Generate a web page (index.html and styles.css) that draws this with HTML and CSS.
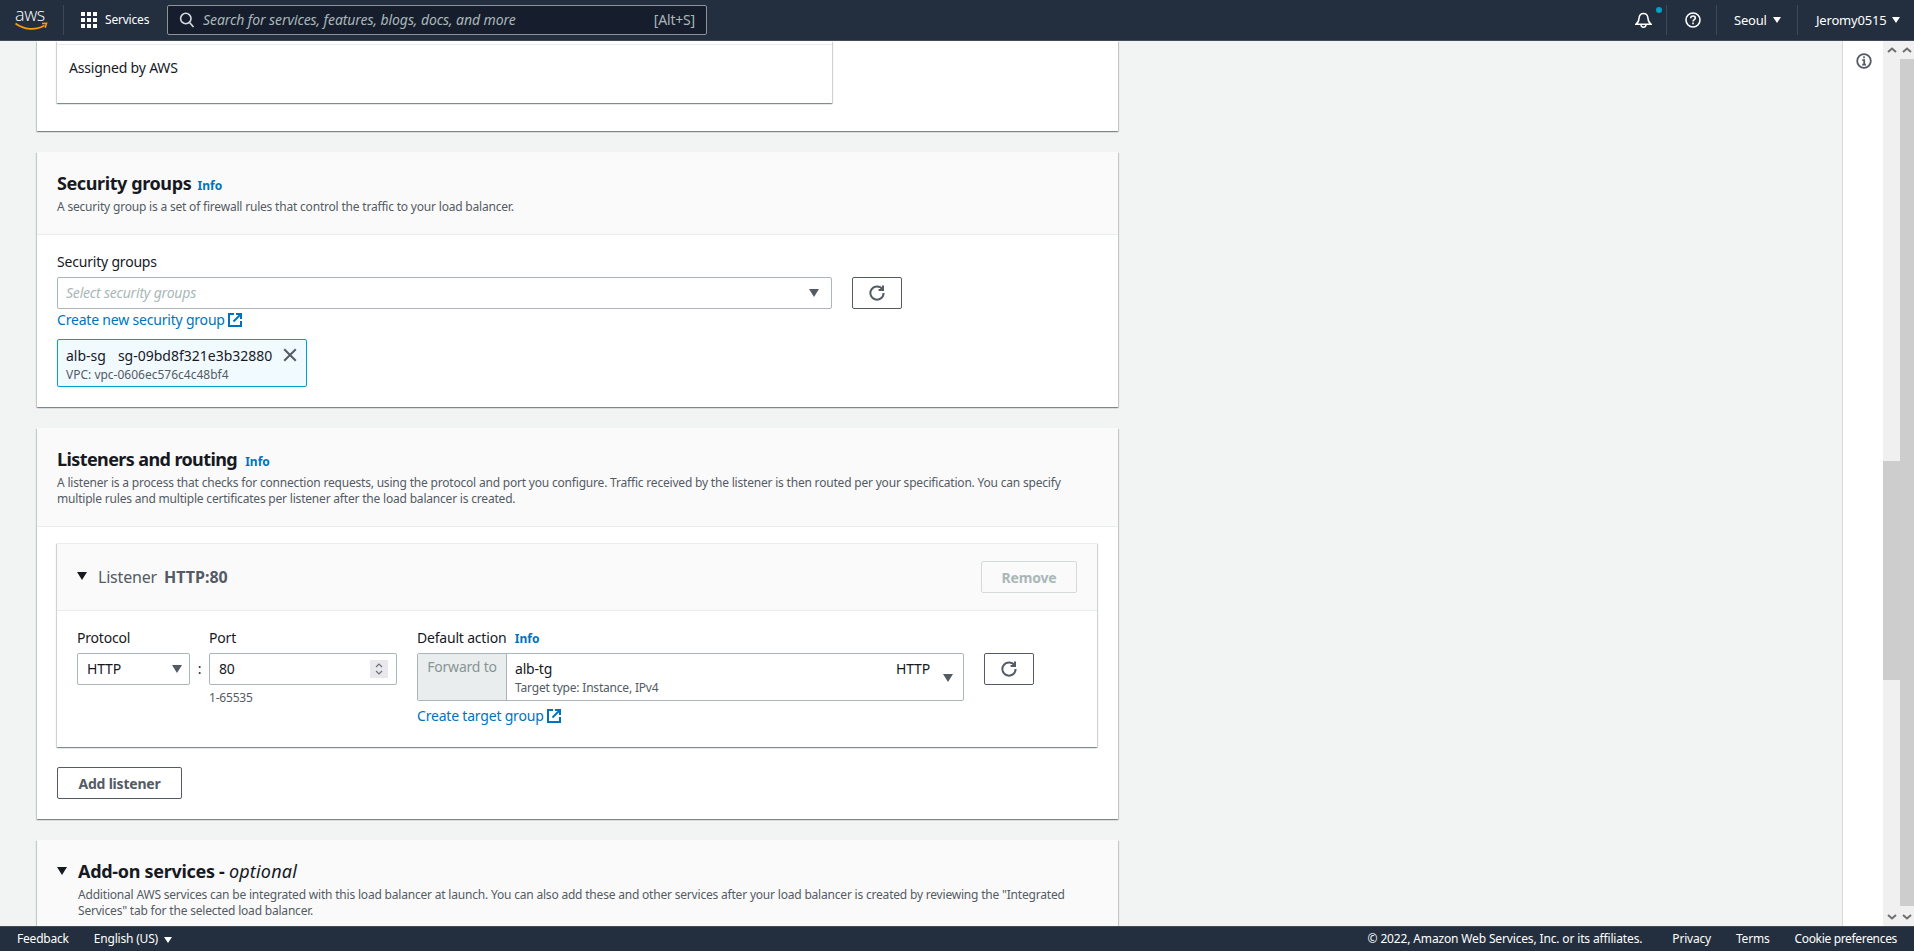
FILE: index.html

```html
<!DOCTYPE html>
<html lang="en">
<head>
<meta charset="utf-8">
<title>Create Application Load Balancer</title>
<link rel="stylesheet" href="styles.css">
</head>
<body>

<header class="nav">
  <div class="logo">
    <span class="logo-text">aws</span>
    <svg class="logo-smile" width="34" height="10" viewBox="0 0 34 10">
      <path d="M0.5 1.5 C9 8 21 8.5 29.5 3.5" fill="none" stroke="#f90" stroke-width="1.8"/>
      <path d="M27 1.6 L31.6 1.4 L30.2 5.8" fill="none" stroke="#f90" stroke-width="1.5"/>
    </svg>
  </div>
  <div class="services">
    <svg width="16" height="16" viewBox="0 0 16 16" fill="#fff">
      <rect x="0" y="0" width="4" height="4"/><rect x="6" y="0" width="4" height="4"/><rect x="12" y="0" width="4" height="4"/>
      <rect x="0" y="6" width="4" height="4"/><rect x="6" y="6" width="4" height="4"/><rect x="12" y="6" width="4" height="4"/>
      <rect x="0" y="12" width="4" height="4"/><rect x="6" y="12" width="4" height="4"/><rect x="12" y="12" width="4" height="4"/>
    </svg>
    <span>Services</span>
  </div>
  <div class="search">
    <svg width="16" height="16" viewBox="0 0 16 16" fill="none" stroke="#d5dbdb" stroke-width="1.6">
      <circle cx="6.8" cy="6.5" r="5.2"/><path d="M10.6 10.4 L14.5 15"/>
    </svg>
    <span class="search-text">Search for services, features, blogs, docs, and more</span>
    <span class="search-key">[Alt+S]</span>
  </div>
  <div class="nav-right">
    <div class="nav-item bell">
      <svg width="17" height="16" viewBox="0 0 17 16" fill="none" stroke="#fff" stroke-width="1.5">
        <path d="M1 12.2 C3.4 10.6 3.8 9 4 6.4 C4.2 3.2 6 1.4 8.5 1.4 C11 1.4 12.8 3.2 13 6.4 C13.2 9 13.6 10.6 16 12.2 Z"/>
        <path d="M6 12.6 C6 14.2 7 15.2 8.5 15.2 C10 15.2 11 14.2 11 12.6"/>
      </svg>
      <span class="bell-dot"></span>
    </div>
    <div class="nav-item help">
      <svg width="16" height="16" viewBox="0 0 16 16" fill="none" stroke="#fff" stroke-width="1.6">
        <circle cx="8" cy="8" r="7"/>
        <path d="M5.7 6.2 C5.8 4.8 6.8 4 8 4 C9.4 4 10.3 4.9 10.3 6 C10.3 7.6 8 7.6 8 9.5"/>
        <path d="M8 10.6 V12.2"/>
      </svg>
    </div>
    <div class="nav-item seoul"><span>Seoul</span><i class="tri tri-white"></i></div>
    <div class="nav-item user"><span>Jeromy0515</span><i class="tri tri-white"></i></div>
  </div>
</header>

<div class="middle">
  <main class="content">

    <section class="card card-top">
      <div class="assigned">
        <div class="assigned-text">Assigned by AWS</div>
      </div>
    </section>

    <section class="card">
      <div class="card-head">
        <h2>Security groups <a class="info">Info</a></h2>
        <p>A security group is a set of firewall rules that control the traffic to your load balancer.</p>
      </div>
      <div class="card-body sg-body">
        <label class="label">Security groups</label>
        <div class="sg-row">
          <div class="input sg-select">
            <span class="placeholder">Select security groups</span>
            <i class="tri tri-grey"></i>
          </div>
          <button class="btn btn-icon">
            <svg width="16" height="16" viewBox="0 0 16 16" fill="none" stroke="#545b64" stroke-width="2">
              <path d="M13.4 4.2 A6.6 6.6 0 1 0 14.6 8"/>
              <path d="M14 0.6 V5 H9.6"/>
            </svg>
          </button>
        </div>
        <a class="link">Create new security group
          <svg class="ext" width="14" height="14" viewBox="0 0 14 14" fill="none" stroke="#0073bb" stroke-width="2">
            <path d="M6 1 H1 V13 H13 V8"/><path d="M5.5 8.5 L12.5 1.5"/><path d="M8 1 H13 V6"/>
          </svg>
        </a>
        <div class="chip">
          <div class="chip-text">
            <div class="chip-title"><span>alb-sg</span><span>sg-09bd8f321e3b32880</span></div>
            <div class="chip-sub">VPC: vpc-0606ec576c4c48bf4</div>
          </div>
          <svg class="chip-x" width="14" height="14" viewBox="0 0 14 14" fill="none" stroke="#545b64" stroke-width="2">
            <path d="M1.2 1.2 L12.8 12.8 M12.8 1.2 L1.2 12.8"/>
          </svg>
        </div>
      </div>
    </section>

    <section class="card">
      <div class="card-head head-listeners">
        <h2>Listeners and routing <a class="info">Info</a></h2>
        <p>A listener is a process that checks for connection requests, using the protocol and port you configure. Traffic received by the listener is then routed per your specification. You can specify multiple rules and multiple certificates per listener after the load balancer is created.</p>
      </div>
      <div class="card-body listeners-body">
        <div class="listener">
          <div class="listener-head">
            <i class="tri tri-dark"></i>
            <span class="listener-name">Listener</span>
            <strong class="listener-port">HTTP:80</strong>
            <button class="btn btn-disabled">Remove</button>
          </div>
          <div class="listener-form">
            <div class="field-protocol">
              <label class="label">Protocol</label>
              <div class="input select-protocol"><span>HTTP</span><i class="tri tri-grey"></i></div>
            </div>
            <div class="colon">:</div>
            <div class="field-port">
              <label class="label">Port</label>
              <div class="input input-port">
                <span>80</span>
                <span class="spinner">
                  <svg width="8" height="14" viewBox="0 0 8 14" fill="none" stroke="#6b7178" stroke-width="1.2">
                    <path d="M1 5 L4 2 L7 5"/><path d="M1 9 L4 12 L7 9"/>
                  </svg>
                </span>
              </div>
              <div class="hint">1-65535</div>
            </div>
            <div class="field-action">
              <label class="label">Default action <a class="info info-action">Info</a></label>
              <div class="action-box">
                <div class="forward">Forward to</div>
                <div class="target">
                  <div class="target-main"><span>alb-tg</span><span>HTTP</span></div>
                  <div class="target-sub">Target type: Instance, IPv4</div>
                </div>
                <i class="tri tri-grey target-arrow"></i>
              </div>
              <a class="link link-target">Create target group
                <svg class="ext" width="14" height="14" viewBox="0 0 14 14" fill="none" stroke="#0073bb" stroke-width="2">
                  <path d="M6 1 H1 V13 H13 V8"/><path d="M5.5 8.5 L12.5 1.5"/><path d="M8 1 H13 V6"/>
                </svg>
              </a>
            </div>
            <button class="btn btn-icon btn-refresh">
              <svg width="16" height="16" viewBox="0 0 16 16" fill="none" stroke="#545b64" stroke-width="2">
                <path d="M13.4 4.2 A6.6 6.6 0 1 0 14.6 8"/>
                <path d="M14 0.6 V5 H9.6"/>
              </svg>
            </button>
          </div>
        </div>
        <button class="btn btn-add">Add listener</button>
      </div>
    </section>

    <section class="card card-addon">
      <div class="card-head head-addon">
        <i class="tri tri-dark"></i>
        <div>
          <h2>Add-on services - <em>optional</em></h2>
          <p>Additional AWS services can be integrated with this load balancer at launch. You can also add these and other services after your load balancer is created by reviewing the "Integrated Services" tab for the selected load balancer.</p>
        </div>
      </div>
    </section>

  </main>

  <aside class="tools">
    <svg width="16" height="16" viewBox="0 0 16 16" fill="none" stroke="#545b64" stroke-width="1.8">
      <circle cx="8" cy="8" r="6.8"/>
      <path d="M6.3 7.2 H8.2 V11.6 M6.2 11.6 H10"/>
      <path d="M7.2 4.2 H8.8" stroke-width="2"/>
    </svg>
  </aside>

  <div class="scroll scroll-inner">
    <svg class="scroll-arrow" width="10" height="6" viewBox="0 0 10 6" fill="none" stroke="#6e6e6e" stroke-width="2"><path d="M1 5 L5 1.5 L9 5"/></svg>
    <div class="scroll-track"><div class="thumb thumb-inner"></div></div>
    <svg class="scroll-arrow" width="10" height="6" viewBox="0 0 10 6" fill="none" stroke="#6e6e6e" stroke-width="2"><path d="M1 1 L5 4.5 L9 1"/></svg>
  </div>
  <div class="scroll scroll-outer">
    <svg class="scroll-arrow" width="10" height="6" viewBox="0 0 10 6" fill="none" stroke="#6e6e6e" stroke-width="2"><path d="M1 5 L5 1.5 L9 5"/></svg>
    <div class="scroll-track"><div class="thumb thumb-outer"></div></div>
    <svg class="scroll-arrow" width="10" height="6" viewBox="0 0 10 6" fill="none" stroke="#6e6e6e" stroke-width="2"><path d="M1 1 L5 4.5 L9 1"/></svg>
  </div>
</div>

<footer class="foot">
  <span class="foot-feedback">Feedback</span>
  <span class="foot-lang">English (US) <i class="tri tri-white tri-small"></i></span>
  <span class="foot-copy">© 2022, Amazon Web Services, Inc. or its affiliates.</span>
  <span class="foot-privacy">Privacy</span>
  <span class="foot-terms">Terms</span>
  <span class="foot-cookie">Cookie preferences</span>
</footer>

</body>
</html>
```

FILE: styles.css

```css
* {
    box-sizing: border-box;
}

html, body {
    height: 100%;
}

body {
    margin: 0;
    display: flex;
    flex-direction: column;
    overflow: hidden;
    background: #f2f3f3;
    color: #16191f;
    font-family: "Noto Sans", "Open Sans", sans-serif;
    font-size: 14px;
    line-height: 20px;
    letter-spacing: -0.014em;
}

/* triangles */
.tri {
    display: inline-block;
    width: 0;
    height: 0;
    border-style: solid;
    border-width: 8px 5px 0 5px;
    border-color: #545b64 transparent transparent transparent;
}

.tri-white {
    border-width: 6px 4px 0 4px;
    border-top-color: #fff;
}

.tri-small {
    margin-left: 3px;
    border-width: 6px 4px 0 4px;
}

.tri-dark {
    border-top-color: #16191f;
}

.tri-grey {
    border-top-color: #545b64;
}

/* top bar */
.nav {
    flex: none;
    height: 41px;
    display: flex;
    align-items: center;
    background: #232f3e;
    border-bottom: 1px solid #414b58;
    color: #fff;
    font-size: 12px;
}

.logo {
    width: 64px;
    height: 30px;
    padding-left: 15px;
    border-right: 1px solid #414750;
}

.logo-text {
    display: block;
    height: 18px;
    font-family: "Open Sans", sans-serif;
    font-size: 18px;
    font-weight: 300;
    line-height: 18px;
    letter-spacing: -0.4px;
}

.logo-smile {
    display: block;
    margin-top: -1px;
}

.services {
    display: flex;
    align-items: center;
    gap: 8px;
    margin-left: 17px;
    width: 86px;
}

.search {
    width: 540px;
    height: 30px;
    display: flex;
    align-items: center;
    padding: 0 11px;
    background: #161e2d;
    border: 1px solid #8d9399;
    border-radius: 2px;
}

.search-text {
    margin-left: 8px;
    flex: 1;
    color: #aab7b8;
    font-style: italic;
    font-size: 14px;
    letter-spacing: -0.08px;
}

.search-key {
    color: #aab7b8;
    font-size: 14px;
}

.nav-right {
    margin-left: auto;
    display: flex;
    align-items: center;
    height: 30px;
    font-size: 13px;
}

.nav-item {
    height: 30px;
    display: flex;
    align-items: center;
    border-right: 1px solid #414750;
}

.bell {
    width: 36px;
    padding-left: 4px;
    position: relative;
}

.bell-dot {
    position: absolute;
    left: 25px;
    top: 2px;
    width: 6px;
    height: 6px;
    border-radius: 50%;
    background: #00a1c9;
}

.help {
    width: 50px;
    padding-left: 18px;
}

.seoul {
    width: 81px;
    padding-left: 17px;
    gap: 6px;
}

.user {
    width: 116px;
    padding-left: 18px;
    gap: 6px;
    border-right: 0;
}

/* middle part */
.middle {
    flex: 1;
    min-height: 0;
    display: flex;
}

.content {
    flex: 1;
    min-width: 0;
    overflow: hidden;
    padding-left: 37px;
}

.card {
    width: 1081px;
    margin-bottom: 21px;
    background: #fff;
    box-shadow: 0 1px 1px 0 rgba(0, 28, 36, .3), 1px 1px 1px 0 rgba(0, 28, 36, .15), -1px 1px 1px 0 rgba(0, 28, 36, .15);
}

.card-top {
    height: 90px;
    padding-left: 20px;
}

.assigned {
    width: 775px;
    height: 62px;
    padding-top: 3px;
    box-shadow: 0 1px 1px 0 rgba(0, 28, 36, .3), 1px 1px 1px 0 rgba(0, 28, 36, .15), -1px 1px 1px 0 rgba(0, 28, 36, .15);
}

.assigned-text {
    height: 100%;
    padding: 13px 0 0 12px;
    border-top: 1px solid #eaeded;
}

.card-head {
    padding: 20px 20px 19px 20px;
    background: #fafafa;
    border-bottom: 1px solid #eaeded;
}

.card-head h2 {
    margin: 0;
    font-size: 18px;
    line-height: 22px;
    font-weight: 700;
    letter-spacing: -0.4px;
}

.card-head p {
    margin: 5px 0 0 0;
    color: #545b64;
    font-size: 12px;
    line-height: 16px;
}

.info {
    margin-left: 2px;
    color: #0073bb;
    font-size: 12px;
    line-height: 1;
    font-weight: 700;
    letter-spacing: 0;
}

.info-action {
    margin-left: 5px;
}

.head-listeners .info {
    margin-left: 4px;
}

.label {
    display: block;
    line-height: 20px;
}

.input {
    height: 32px;
    background: #fff;
    border: 1px solid #aab7b8;
    border-radius: 2px;
    display: flex;
    align-items: center;
    justify-content: space-between;
}

.placeholder {
    color: #aab7b8;
    font-style: italic;
}

.link {
    display: block;
    color: #0073bb;
    line-height: 20px;
}

.ext {
    vertical-align: -2px;
}

.btn {
    height: 32px;
    padding: 0;
    background: #fff;
    border: 1px solid #545b64;
    border-radius: 2px;
    color: #545b64;
    font-family: inherit;
    font-size: 14px;
    font-weight: 700;
    letter-spacing: inherit;
    display: flex;
    align-items: center;
    justify-content: center;
}

.btn-icon {
    width: 50px;
}

/* security groups */
.sg-body {
    padding: 17px 20px 20px 20px;
}

.sg-row {
    display: flex;
    gap: 20px;
    margin-top: 5px;
}

.sg-select {
    width: 775px;
    padding: 0 12px 0 8px;
}

.sg-body .link {
    margin-top: 1px;
}

.chip {
    width: 250px;
    height: 48px;
    margin-top: 9px;
    padding: 5px 9px 0 8px;
    display: flex;
    justify-content: space-between;
    background: #f1faff;
    border: 1px solid #00a1c9;
    border-radius: 2px;
    letter-spacing: 0;
}

.chip-title {
    display: flex;
    gap: 12px;
    line-height: 22px;
}

.chip-sub {
    color: #545b64;
    font-size: 12px;
    line-height: 16px;
}

.chip-x {
    margin-top: 3px;
}

/* listeners */
.head-listeners h2 {
    letter-spacing: -0.6px;
}

.listeners-body {
    padding: 16px 21px 20px 20px;
}

.listener {
    box-shadow: 0 1px 1px 0 rgba(0, 28, 36, .3), 1px 1px 1px 0 rgba(0, 28, 36, .15), -1px 1px 1px 0 rgba(0, 28, 36, .15);
    border-top: 1px solid #eaeded;
}

.listener-head {
    height: 67px;
    padding: 0 20px;
    display: flex;
    align-items: center;
    background: #fafafa;
    border-bottom: 1px solid #eaeded;
    color: #545b64;
    font-size: 16px;
}

.listener-name {
    margin-left: 11px;
}

.listener-port {
    margin-left: 7px;
    letter-spacing: 0;
}

.listener-head .tri {
    margin-top: -2px;
}

.btn-disabled {
    margin-left: auto;
    width: 96px;
    background: #fff0;
    border-color: #d5dbdb;
    color: #aab7b8;
}

.listener-form {
    height: 136px;
    padding: 17px 20px 0 20px;
    display: flex;
    background: #fff;
}

.field-protocol {
    width: 113px;
}

.field-protocol .input,
.field-port .input {
    margin-top: 5px;
}

.select-protocol {
    padding: 0 7px 0 9px;
}

.colon {
    width: 19px;
    padding-top: 31px;
    text-align: center;
}

.field-port {
    width: 188px;
}

.input-port {
    padding: 0 8px 0 9px;
}

.spinner {
    width: 18px;
    height: 18px;
    display: flex;
    align-items: center;
    justify-content: center;
    background: #e9e9ed;
}

.hint {
    margin-top: 5px;
    color: #545b64;
    font-size: 12px;
    line-height: 16px;
}

.field-action {
    width: 547px;
    margin-left: 20px;
}

.action-box {
    height: 48px;
    margin-top: 5px;
    display: flex;
    background: #fff;
    border: 1px solid #aab7b8;
    border-radius: 2px;
    position: relative;
}

.forward {
    width: 89px;
    padding-top: 3px;
    background: #eaeded;
    border-right: 1px solid #aab7b8;
    color: #879596;
    text-align: center;
}

.target {
    flex: 1;
    padding: 5px 33px 0 8px;
}

.target-main {
    display: flex;
    justify-content: space-between;
}

.target-sub {
    color: #545b64;
    font-size: 12px;
    line-height: 16px;
    margin-top: 1px;
}

.target-arrow {
    position: absolute;
    right: 10px;
    top: 20px;
}

.link-target {
    margin-top: 5px;
}

.btn-refresh {
    margin: 25px 0 0 20px;
}

.btn-add {
    width: 125px;
    margin-top: 20px;
}

/* add-on */
.card-addon {
    margin-bottom: 0;
}

.head-addon {
    display: flex;
    align-items: flex-start;
    gap: 11px;
    height: 100px;
    border-bottom: 0;
}

.head-addon h2 {
    letter-spacing: -0.3px;
}

.head-addon .tri {
    margin-top: 7px;
}

.head-addon em {
    font-weight: 400;
    letter-spacing: 0.2px;
}

/* tools panel and scrollbars */
.tools {
    flex: none;
    width: 41px;
    padding: 12px 0 0 13px;
    background: #fff;
    border-left: 1px solid #d5dbdb;
}

.scroll {
    flex: none;
    display: flex;
    flex-direction: column;
    align-items: center;
    background: #f0f0f0;
}

.scroll-inner {
    width: 17px;
}

.scroll-outer {
    width: 14px;
}

.scroll-arrow {
    flex: none;
    margin: 6px 0;
}

.scroll-track {
    flex: 1;
    width: 100%;
}

.thumb {
    background: #cdcdcd;
}

.thumb-inner {
    height: 219px;
    margin-top: 402px;
}

.thumb-outer {
    height: 847px;
}

/* footer */
.foot {
    flex: none;
    height: 25px;
    display: flex;
    align-items: center;
    background: #232f3e;
    border-top: 1px solid #414b58;
    color: #fff;
    font-size: 12px;
    letter-spacing: -0.2px;
    padding: 0 17px;
}

.foot-lang {
    margin-left: 25px;
}

.foot-copy {
    margin-left: auto;
    letter-spacing: -0.15px;
}

.foot-privacy {
    margin-left: 30px;
}

.foot-terms {
    margin-left: 25px;
}

.foot-cookie {
    margin-left: 25px;
    letter-spacing: -0.33px;
}
```
